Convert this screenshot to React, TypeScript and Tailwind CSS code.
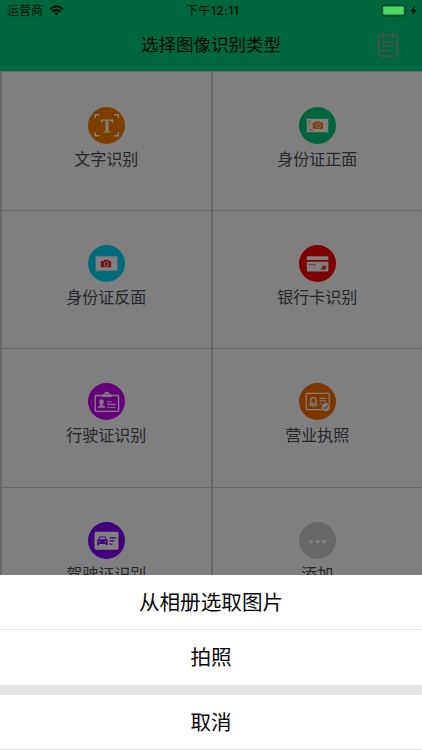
import type { ReactNode } from 'react';

const T = '#808080';

function Camera({ color }: { color: string }) {
  return (
    <g>
      <path d="M14.2 15.2h1.8l.8-1.2h3.6l.8 1.2h1.3q.9 0 .9.9v4.4q0 .9-.9.9h-8.3q-.9 0-.9-.9v-4.4q0-.9.9-.9z" fill={color} />
      <circle cx="18.7" cy="18.2" r="2.1" fill="none" stroke={T} strokeWidth=".8" />
    </g>
  );
}

function Badge({ color, children }: { color: string; children: ReactNode }) {
  return (
    <svg viewBox="0 0 36 36" className="size-[37px] shrink-0">
      <circle cx="18" cy="18" r="18" fill={color} />
      {children}
    </svg>
  );
}

const items: { label: string; color: string; art: ReactNode }[] = [
  {
    label: '文字识别',
    color: '#7c3f00',
    art: (
      <g fill="none" stroke={T} strokeWidth="1.5">
        <path d="M7 11V7.5h4M25.5 7.5h4V11M29.5 24.5V28h-4M11 28H7v-3.5" />
        <path d="M12.5 12.2h12v3.4h-.8q-.4-2.2-2-2.2h-1.8v9.6q0 .8 1.8.9v.9h-6.4v-.9q1.8-.1 1.8-.9v-9.6h-1.8q-1.6 0-2 2.2h-.8z" fill={T} stroke="none" />
      </g>
    ),
  },
  {
    label: '身份证正面',
    color: '#00643c',
    art: (
      <g>
        <path d="M7.5 11.4h21v13.2h-21z" fill={T} />
        <path d="M7 10.8l1 1M29 10.8l-1 1M7 25.2l1-1M29 25.2l-1-1" stroke={T} strokeWidth=".7" />
        <path d="M9.3 13.5h2M9.3 15.5h1.5M9.3 17.5h1.7M9.5 22.5h4" stroke="#7f431a" strokeWidth=".9" />
        <Camera color="#7f3d08" />
      </g>
    ),
  },
  {
    label: '身份证反面',
    color: '#006b7a',
    art: (
      <g>
        <path d="M7.2 10.8h21.6v14.4H7.2z" fill={T} stroke="#3b6470" strokeWidth=".6" />
        <g transform="translate(-.8 .3)"><Camera color="#760d14" /></g>
      </g>
    ),
  },
  {
    label: '银行卡识别',
    color: '#7d0002',
    art: (
      <g>
        <path d="M8.4 11h19.4q.8 0 .8.8v2.7h-21v-2.7q0-.8.8-.8zM7.6 16.2h21v8.7q0 1-.9 1H8.5q-.9 0-.9-1z" fill={T} />
        <path d="M9.5 19h1.3M11.9 19h1.3M14.3 19h1.3" stroke="#7d0002" strokeWidth="1.2" />
        <path d="M22.7 20.3h4.2l-1 3.7h-4.6zM22.7 22.2h3" fill="#7d0002" stroke={T} strokeWidth=".4" />
      </g>
    ),
  },
  {
    label: '行驶证识别',
    color: '#650078',
    art: (
      <g fill="none" stroke={T} strokeWidth="1.4">
        <path d="M13.2 12.2H8q-1 0-1 1v13.4q0 1 1 1h20.8q1 0 1-1V13.2q0-1-1-1h-5.2" />
        <path d="M13.5 13.2v-1.8h2.6q0-2.6 2.3-2.6t2.3 2.6h2.6v1.8z" fill={T} strokeWidth=".8" />
        <circle cx="18.4" cy="10.8" r=".7" fill="#650078" stroke="none" />
        <path d="M13.1 15.8c3 0 2.5 4 1.2 5v1c2 .5 2.5 1 2.5 2.4H9.5c0-1.4.6-1.9 2.5-2.4v-1c-1.4-1-1.8-5 1.1-5z" fill={T} stroke="none" />
        <path d="M18.6 18.2h4.5M18.6 20.8h8.2M18.6 23.6h8.2" strokeWidth="1" />
      </g>
    ),
  },
  {
    label: '营业执照',
    color: '#7d3700',
    art: (
      <g fill="none" stroke={T} strokeWidth="1.2">
        <rect x="7" y="10.2" width="22.4" height="15.6" rx="1" />
        <circle cx="14" cy="17" r="2.8" />
        <path d="M11.8 18.8l-1.6 2.8 1.7-.2.9 1.4 1-3M16.2 18.8l1.6 2.8-1.7-.2-.9 1.4-1-3" strokeWidth="1" />
        <path d="M20 15h6.5M20 17.5h6.5M20 20h1.6" />
        <circle cx="25.9" cy="23.4" r="4.3" fill={T} stroke="#7d3700" strokeWidth=".7" />
        <path d="M23.8 23.4l1.6 1.6 2.8-3" stroke="#7d3700" strokeWidth="1.1" />
      </g>
    ),
  },
  {
    label: '驾驶证识别',
    color: '#41007c',
    art: (
      <g>
        <rect x="6.3" y="9.6" width="23.4" height="17.4" rx="1.6" fill={T} />
        <path d="M11.1 14h5.9l1.3 3 .8.8v4.7h-1.9v-1.2h-6.3v1.2H9v-4.7l.8-.8z" fill="#41007c" />
        <path d="M11.7 15h4.8l.7 1.9h-6.3z" fill={T} />
        <circle cx="11" cy="19.2" r=".8" fill={T} />
        <circle cx="17" cy="19.2" r=".8" fill={T} />
        <path d="M21 15.4h6M21 18.4h4.4M21 21.5h2.8" stroke="#41007c" strokeWidth="1.3" />
      </g>
    ),
  },
  {
    label: '添加',
    color: '#686868',
    art: (
      <g fill="#808080">
        <circle cx="11.7" cy="19" r="1.8" />
        <circle cx="18.3" cy="19" r="1.8" />
        <circle cx="24.7" cy="19" r="1.8" />
      </g>
    ),
  },
];

export default function App() {
  return (
    <div className="relative h-[750px] w-[422px] overflow-hidden bg-[#7f7f7f] font-['Liberation_Sans','Noto_Sans_CJK_SC',sans-serif] text-black">
      <header className="h-[71px] bg-[#00663d]">
        <div className="grid h-[21px] grid-cols-3 items-center pl-[7px] pr-1 text-xs leading-none text-[#001109]">
          <div className="flex items-center gap-[6px]">
            <span>运营商</span>
            <svg viewBox="0 0 15 11" className="h-[11px] w-[15px]" fill="none" stroke="#001109" strokeWidth="2">
              <path d="M1 4.2Q7.5-1.7 14 4.2M3.4 6.7Q7.5 3 11.6 6.7" />
              <path d="M5.3 8.2Q7.5 6.5 9.7 8.2L7.5 10.8z" fill="#001109" stroke="none" />
            </svg>
          </div>
          <div className="whitespace-nowrap text-center font-['Inter','Noto_Sans_CJK_SC',sans-serif] text-[12px] tracking-[0.45px]">
            下午<span className="font-medium">12:11</span>
          </div>
          <svg viewBox="0 0 37 13" className="h-[13px] w-[37px] justify-self-end">
            <rect x=".8" y="1" width="23.4" height="11" rx="2.4" fill="none" stroke="#003d22" strokeWidth="1" />
            <rect x="2.2" y="2.4" width="20.6" height="8.2" rx="1.2" fill="#4cd964" />
            <path d="M25.4 4.7q1.5.4 1.5 1.8t-1.5 1.8z" fill="#003d22" />
            <path d="M34 1.4l-4.6 5.8h2.7l-1.1 4.6 4.5-5.8h-2.6z" fill="#001109" />
          </svg>
        </div>
        <div className="grid h-[48px] grid-cols-[1fr_auto_1fr] items-center">
          <h1 className="col-start-2 pt-px text-[17.5px] leading-none text-[#000a05]">选择图像识别类型</h1>
          <svg viewBox="0 0 22 26" className="mr-[23px] h-[26px] w-[22px] justify-self-end" fill="none" stroke="#4a5249" strokeWidth="1.7" strokeLinecap="round">
            <path d="M4 3.5H3q-1.4 0-1.4 1.4v17.7Q1.6 24 3 24h15.9q1.4 0 1.4-1.4V4.9q0-1.4-1.4-1.4H18M8 3.5h6M6 1.4v4.3M16 1.4v4.3M6 10h10M6 14h10M6 18.6h6" />
          </svg>
        </div>
      </header>

      <main className="grid grid-cols-2 gap-x-[1.5px] gap-y-px bg-[#686868] pl-[1.5px] pt-[1.4px]">
        {items.map((item) => (
          <div key={item.label} className="flex h-[137.4px] flex-col items-center bg-[#7f7f7f] pt-[34.2px]">
            <Badge color={item.color}>{item.art}</Badge>
            <span className="mt-[7px] text-base leading-[17px] text-[#26272b]">{item.label}</span>
          </div>
        ))}
      </main>

      <div className="absolute inset-x-0 bottom-0 flex flex-col bg-white text-[20.6px] leading-none text-[#080808]">
        <button className="h-[55px] border-b border-[#e5e5e5] pt-[2px]">从相册选取图片</button>
        <button className="h-[55px] pt-[2px]">拍照</button>
        <div className="h-[10px] bg-[#e5e5e5]" />
        <button className="h-[55px] border-b border-[#e5e5e5] pt-[2px]">取消</button>
      </div>
    </div>
  );
}
